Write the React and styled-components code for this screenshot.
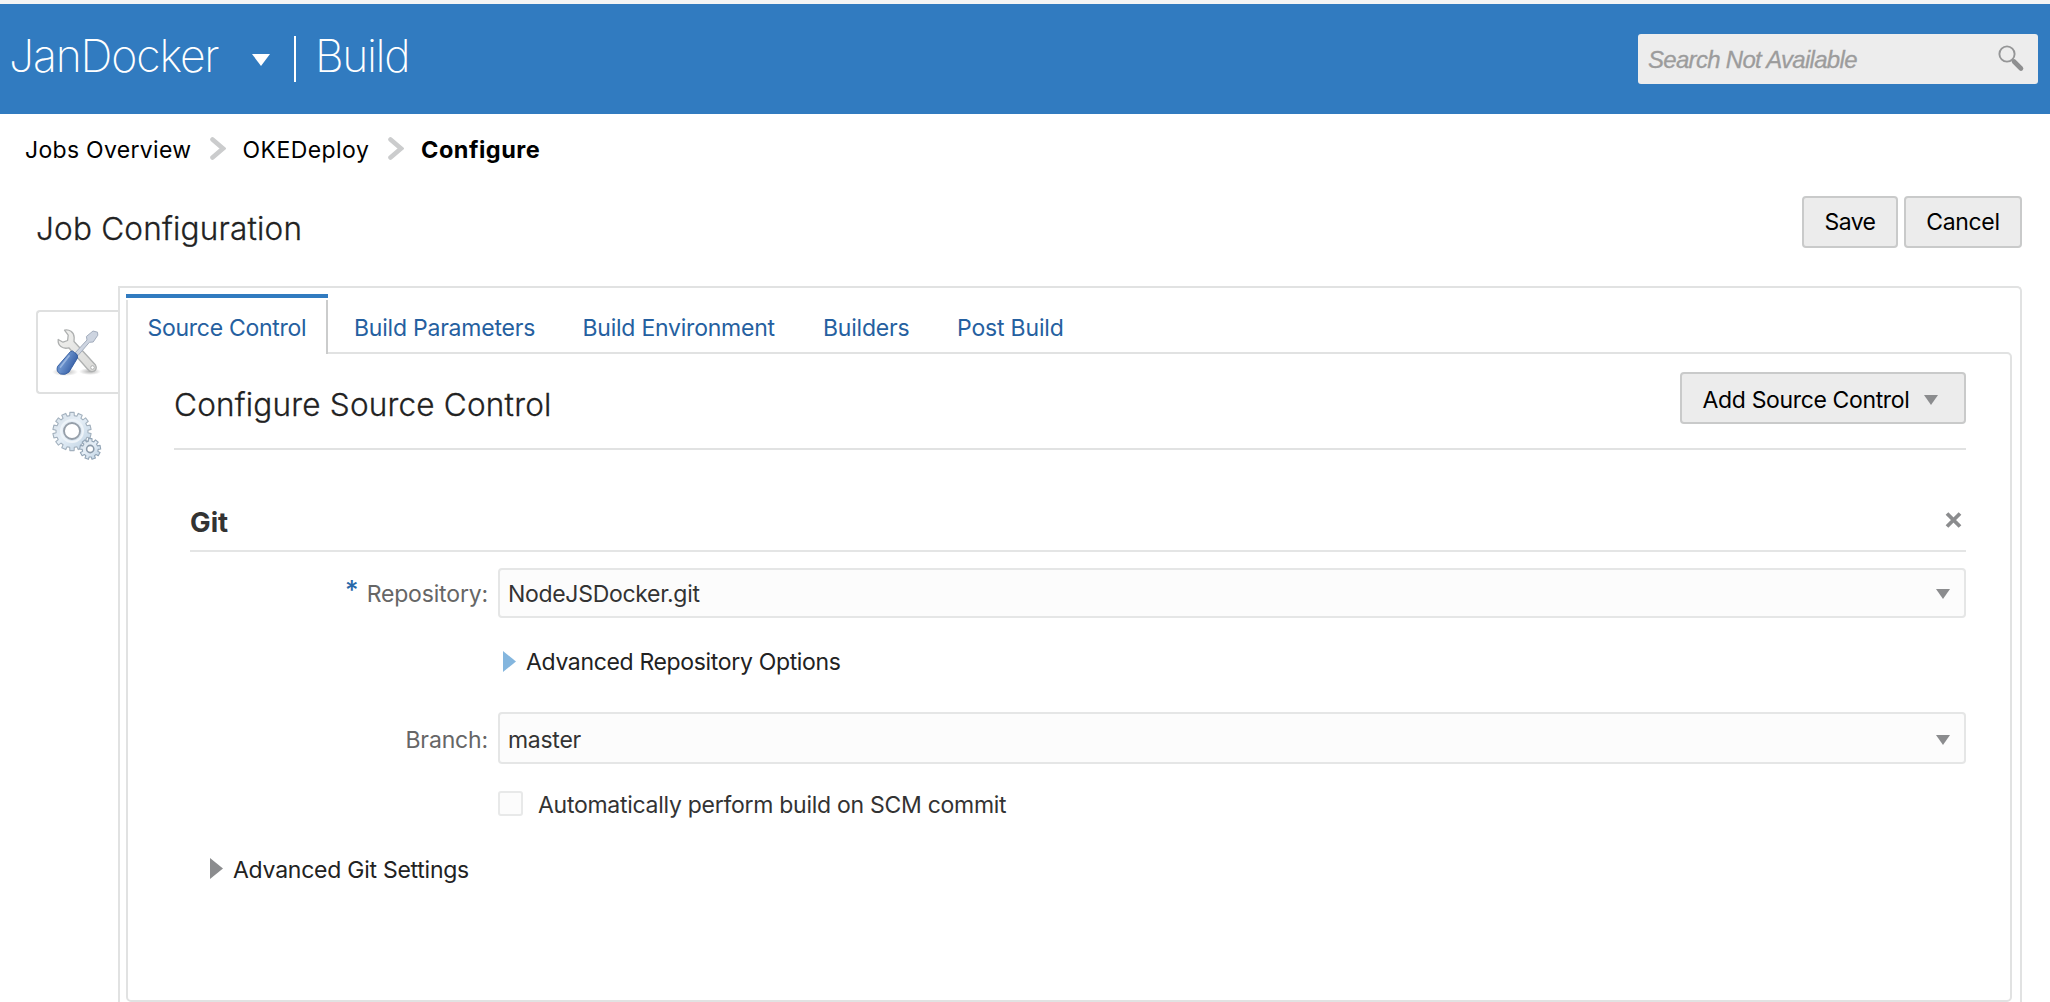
import React from 'react';
import styled, { createGlobalStyle } from 'styled-components';

const GlobalStyle = createGlobalStyle`
  * { box-sizing: border-box; }
  html, body { margin: 0; height: 100%; overflow: hidden; }
  #root { height: 100%; }
  body { background: #fff; font-family: Inter, Roboto, sans-serif; }
`;

const Text = styled.span`
  display: block;
  white-space: nowrap;
  font-size: ${(p) => p.$size || 23}px;
  font-weight: ${(p) => p.$weight || 400};
  letter-spacing: ${(p) => p.$track || 0}px;
  line-height: 1.3;
  padding-top: ${(p) => (p.$drop === undefined ? 3 : p.$drop)}px;
  color: ${(p) => p.$color || '#222'};
`;

const Page = styled.div`
  height: 1002px;
  display: flex;
  flex-direction: column;
  overflow: hidden;
`;

const Header = styled.header`
  flex: none;
  height: 114px;
  border-top: 4px solid #f3f4f4;
  background: #317bc0;
  display: flex;
  align-items: center;
  justify-content: space-between;
  padding: 0 12px 0 9px;
`;

const Brand = styled.div`
  display: flex;
  align-items: center;
`;

const BrandText = styled(Text)`
  margin-bottom: 7px;
  width: ${(p) => p.$width}px;
`;

const BrandDivider = styled.div`
  width: 2px;
  height: 46px;
  background: #fff;
  margin: 0 19px 0 24px;
`;

const SearchBox = styled.div`
  width: 400px;
  height: 50px;
  border-radius: 3px;
  background: #ededed;
  display: flex;
  align-items: center;
  justify-content: space-between;
  padding: 0 13px 0 10px;
`;

const SearchHint = styled(Text)`
  font-family: "Liberation Sans", Arial, sans-serif;
  font-style: italic;
  -webkit-text-stroke: 0.3px #9c9c9c;
`;

const Breadcrumbs = styled.nav`
  flex: none;
  height: 70px;
  display: flex;
  align-items: center;
  padding-left: 25px;
`;

const Crumb = styled(Text)`
  width: ${(p) => p.$width}px;
`;

const CrumbArrow = styled.svg`
  width: 16px;
  height: 24px;
  margin: 0 17px;
`;

const TitleBar = styled.div`
  flex: none;
  height: 102px;
  display: flex;
  justify-content: space-between;
  align-items: flex-start;
  padding: 12px 28px 0 36px;
`;

const Heading = styled(Text)`
  margin-top: ${(p) => p.$top || 0}px;
`;

const PageHeading = styled(Heading)`
  -webkit-text-stroke: 0.3px #222;
`;

const ButtonRow = styled.div`
  display: flex;
  gap: 6px;
`;

const Button = styled.button`
  width: ${(p) => p.$width}px;
  height: 52px;
  border: 2px solid #c9caca;
  border-radius: 4px;
  background: #ececec;
  padding: 0 ${(p) => p.$inset || 0}px 0 0;
  font-family: inherit;
  display: flex;
  align-items: center;
  justify-content: center;
  gap: 15px;
`;

const Main = styled.div`
  flex: 1;
  min-height: 0;
  display: flex;
  padding: 0 28px 0 34px;
`;

const SideTabs = styled.div`
  width: 84px;
  padding-top: 24px;
  display: flex;
  flex-direction: column;
  align-items: stretch;
`;

const SideTab = styled.div`
  height: 84px;
  margin-left: 2px;
  display: flex;
  align-items: center;
  padding-left: 14px;
  border: 2px solid ${(p) => (p.$active ? '#dfe0e0' : 'transparent')};
  border-right: 0;
  border-radius: 4px 0 0 4px;
`;

const OuterPanel = styled.section`
  flex: 1;
  border: 2px solid #e1e2e2;
  border-bottom: 0;
  border-top-right-radius: 5px;
  padding: 6px 8px 0 6px;
  display: flex;
  flex-direction: column;
`;

const TabBar = styled.div`
  height: 58px;
  display: flex;
`;

const Tab = styled.div`
  width: ${(p) => p.$width}px;
  padding: 17px 0 0 26px;
`;

const ActiveTab = styled.div`
  width: 202px;
  height: 60px;
  background: #fff;
  position: relative;
  z-index: 1;
`;

const TabMarker = styled.div`
  height: 4px;
  margin-bottom: 2px;
  background: #317bc0;
`;

const ActiveTabBody = styled.div`
  height: 54px;
  border-left: 2px solid #e1e2e2;
  border-right: 2px solid #cbcccc;
  padding: 11px 0 0 19.5px;
`;

const InnerPanel = styled.div`
  flex: 1;
  border: 2px solid #e1e2e2;
  border-radius: 0 5px 5px 5px;
  padding: 0 44px 0 46px;
`;

const SectionHead = styled.div`
  height: 96px;
  display: flex;
  align-items: center;
  justify-content: space-between;
  padding: 18px 0 24px;
  border-bottom: 2px solid #e1e2e2;
`;

const GitSection = styled.div`
  margin-left: 16px;
`;

const GitHead = styled.div`
  height: 102px;
  display: flex;
  align-items: center;
  justify-content: space-between;
  padding: 42px 4px 0 0;
  border-bottom: 2px solid #e4e5e5;
`;

const FormRow = styled.div`
  display: grid;
  grid-template-columns: 308px 1fr;
  align-items: center;
  height: ${(p) => p.$height}px;
  margin-top: ${(p) => p.$top}px;
`;

const Label = styled.div`
  display: flex;
  justify-content: flex-end;
  align-items: flex-start;
  gap: 8px;
  padding-right: 10px;
  margin-top: ${(p) => p.$shift || 0}px;
`;

const Required = styled(Text)`
  margin: -7px 0 -10px;
`;

const Select = styled.div`
  height: 100%;
  border: 2px solid #e5e6e6;
  border-radius: 4px;
  background: #fcfcfc;
  display: flex;
  align-items: center;
  justify-content: space-between;
  padding: 0 14px 0 8px;
`;

const Disclosure = styled.div`
  grid-column: ${(p) => (p.$wide ? '1 / 3' : '2')};
  display: flex;
  align-items: center;
  gap: 10px;
  padding-left: ${(p) => p.$indent}px;
`;

const CheckLine = styled.label`
  grid-column: 2;
  display: flex;
  align-items: center;
  gap: 15px;
`;

const CheckBox = styled.span`
  width: 25px;
  height: 25px;
  border: 2px solid #e8e9e9;
  border-radius: 3px;
  background: #fcfcfc;
`;

const Icon = styled.svg`
  flex: none;
  display: block;
  margin-top: ${(p) => p.$shift || 0}px;
`;

const Down = ({ color = '#8b8c8e', w = 14, h = 10, shift = 0 }) => (
  <Icon width={w} height={h} viewBox="0 0 14 10" preserveAspectRatio="none" $shift={shift}>
    <path d="M0 0H14L7 10Z" fill={color} />
  </Icon>
);

const Right = ({ color }) => (
  <Icon width="13" height="21" viewBox="0 0 13 21">
    <path d="M0 0L13 10.5L0 21Z" fill={color} />
  </Icon>
);

const Chevron = () => (
  <CrumbArrow viewBox="0 0 16 24">
    <path d="M2.5 2.5L13 11.5L2.5 20.5" fill="none" stroke="#cbcccd" strokeWidth="4.6" strokeLinecap="round" strokeLinejoin="miter" />
  </CrumbArrow>
);

const SearchIcon = () => (
  <Icon width="28" height="28" viewBox="0 0 28 28" $shift={-2}>
    <circle cx="10" cy="10" r="7.6" fill="none" stroke="#959697" strokeWidth="1.9" />
    <path d="M17 17.5L24 24.5" stroke="#8e8f90" strokeWidth="4.6" strokeLinecap="round" />
  </Icon>
);

const ToolsIcon = () => (
  <Icon width="50" height="50" viewBox="0 0 50 50" $shift={1}>
    <defs>
      <linearGradient id="steel" x1="0" y1="0" x2="1" y2="1">
        <stop offset="0" stopColor="#f1f1ef" />
        <stop offset="1" stopColor="#d9d9d7" />
      </linearGradient>
      <linearGradient id="grip" x1="0" y1="0" x2="1" y2="0.6">
        <stop offset="0" stopColor="#3f6cb4" />
        <stop offset="0.45" stopColor="#6b92cc" />
        <stop offset="1" stopColor="#2c559f" />
      </linearGradient>
      <radialGradient id="shade">
        <stop offset="0" stopColor="#000" stopOpacity="0.3" />
        <stop offset="1" stopColor="#000" stopOpacity="0" />
      </radialGradient>
    </defs>
    <ellipse cx="13" cy="44" rx="13" ry="4" fill="url(#shade)" />
    <ellipse cx="38" cy="43.5" rx="11" ry="3.5" fill="url(#shade)" />
    <path d="M12.5 2.2C17 1 22 4 22.2 9.5L22 13.5L43.5 37Q45.5 41 42 43.2Q38 44.5 35.5 41L16.8 19.8C10.5 21.5 5.5 17.5 6.2 11.5L11 14.2L15.6 12.5L16.2 7.2Z" fill="url(#steel)" stroke="#aeb0b0" strokeWidth="1.3" strokeLinejoin="round" />
    <circle cx="40.5" cy="39.5" r="1.8" fill="#fff" stroke="#a9abab" strokeWidth="0.9" />
    <path d="M23 25L35 12L34.4 8.5L41 3L45.5 4.2L45.8 7.2L41.2 14L37.4 14.3L26 27.5Z" fill="#cdd4e0" stroke="#a3adbd" strokeWidth="1" strokeLinejoin="round" />
    <path d="M18.5 23.5Q20.5 22 22.5 24.5Q26.5 26.5 25.5 30L17 44Q13.5 47.5 8.5 46Q3.8 43.5 5.5 38.5Z" fill="url(#grip)" stroke="#315a9e" strokeWidth="0.9" />
    <path d="M17 28L8.5 39" stroke="#a9c3e8" strokeWidth="1.8" strokeLinecap="round" opacity="0.7" />
  </Icon>
);

const gearPath = (cx, cy, teeth, outer, inner) => {
  const step = (Math.PI * 2) / teeth;
  const profile = [[-0.32, inner], [-0.25, outer], [0.25, outer], [0.32, inner]];
  const points = [];
  for (let i = 0; i < teeth; i += 1) {
    profile.forEach(([f, r]) => {
      const a = (i + f) * step - Math.PI / 2;
      points.push(`${(cx + r * Math.cos(a)).toFixed(2)} ${(cy + r * Math.sin(a)).toFixed(2)}`);
    });
  }
  return `M${points.join('L')}Z`;
};

const GearsIcon = () => (
  <Icon width="50" height="50" viewBox="0 0 50 50" $shift={0}>
    <defs>
      <linearGradient id="gear" x1="0" y1="0" x2="1" y2="1">
        <stop offset="0" stopColor="#d3dde6" />
        <stop offset="0.45" stopColor="#e6eff7" />
        <stop offset="1" stopColor="#b9cee0" />
      </linearGradient>
    </defs>
    <path d={gearPath(20, 20.5, 14, 19.2, 16)} fill="url(#gear)" stroke="#a3b1be" strokeWidth="1.1" strokeLinejoin="round" />
    <circle cx="20" cy="20" r="11" fill="none" stroke="#eef4f9" strokeWidth="2" />
    <circle cx="20" cy="20" r="8" fill="#fff" stroke="#969fa9" strokeWidth="1.9" />
    <path d={gearPath(38.2, 38, 9, 10.5, 8)} fill="url(#gear)" stroke="#93a5b6" strokeWidth="1.1" strokeLinejoin="round" />
    <circle cx="38.2" cy="38" r="3.6" fill="#fff" stroke="#8b9aa9" strokeWidth="1.6" />
  </Icon>
);

const CloseIcon = () => (
  <Icon width="18" height="18" viewBox="0 0 18 18" $shift={-2}>
    <path d="M3 2.5L16 15.5M16 2.5L3 15.5" stroke="#8b8c8e" strokeWidth="3.8" />
  </Icon>
);

const tabs = [
  { label: 'Build Parameters', width: 228.5, track: -0.22 },
  { label: 'Build Environment', width: 240.5, track: -0.23 },
  { label: 'Builders', width: 134, track: -0.22 },
  { label: 'Post Build', width: 160, track: -0.18 },
];

export default function App() {
  return (
    <Page>
      <GlobalStyle />
      <Header>
        <Brand>
          <BrandText $size={44.5} $weight={150} $track={-1.15} $color="#fff" $width={243}>JanDocker</BrandText>
          <Down color="#fff" w={18} h={12} shift={1} />
          <BrandDivider />
          <BrandText $size={44.5} $weight={150} $track={-1.4} $color="#fff" $width={95}>Build</BrandText>
        </Brand>
        <SearchBox>
          <SearchHint $size={24} $weight={400} $track={-0.7} $color="#9c9c9c" $drop={2}>Search Not Available</SearchHint>
          <SearchIcon />
        </SearchBox>
      </Header>
      <Breadcrumbs>
        <Crumb $track={0.3} $color="#000" $width={167.5}>Jobs Overview</Crumb>
        <Chevron />
        <Crumb $track={0.44} $color="#000" $width={128.5}>OKEDeploy</Crumb>
        <Chevron />
        <Crumb $size={23.5} $weight={700} $track={0.5} $color="#000" $width={122} $drop={2}>Configure</Crumb>
      </Breadcrumbs>
      <TitleBar>
        <PageHeading $size={31.5} $weight={300} $track={0.2} $top={10}>Job Configuration</PageHeading>
        <ButtonRow>
          <Button $width={96}><Text $track={-0.6} $color="#000" $drop={1}>Save</Text></Button>
          <Button $width={118}><Text $track={-0.35} $color="#000" $drop={1}>Cancel</Text></Button>
        </ButtonRow>
      </TitleBar>
      <Main>
        <SideTabs>
          <SideTab $active><ToolsIcon /></SideTab>
          <SideTab><GearsIcon /></SideTab>
        </SideTabs>
        <OuterPanel>
          <TabBar>
            <ActiveTab>
              <TabMarker />
              <ActiveTabBody><Text $track={-0.28} $color="#2560a0">Source Control</Text></ActiveTabBody>
            </ActiveTab>
            {tabs.map((tab) => (
              <Tab key={tab.label} $width={tab.width}>
                <Text $track={tab.track} $color="#2560a0">{tab.label}</Text>
              </Tab>
            ))}
          </TabBar>
          <InnerPanel>
            <SectionHead>
              <PageHeading $size={31.5} $weight={300} $track={0.2} $top={12}>Configure Source Control</PageHeading>
              <Button $width={286} $inset={5}>
                <Text $track={-0.36} $color="#000" $drop={5}>Add Source Control</Text>
                <Down shift={3} />
              </Button>
            </SectionHead>
            <GitSection>
              <GitHead>
                <Heading $size={27.5} $weight={650} $top={0} $color="#333">Git</Heading>
                <CloseIcon />
              </GitHead>
              <FormRow $top={16} $height={50}>
                <Label>
                  <Required $size={26} $weight={500} $color="#2868a8">*</Required>
                  <Text $track={-0.16} $color="#666">Repository:</Text>
                </Label>
                <Select>
                  <Text $track={-0.31} $color="#333">NodeJSDocker.git</Text>
                  <Down shift={1} />
                </Select>
              </FormRow>
              <FormRow $top={24} $height={39}>
                <Disclosure $indent={5}>
                  <Right color="#84b6de" />
                  <Text $track={-0.34}>Advanced Repository Options</Text>
                </Disclosure>
              </FormRow>
              <FormRow $top={31} $height={52}>
                <Label $shift={3}><Text $track={-0.15} $color="#666">Branch:</Text></Label>
                <Select>
                  <Text $track={-0.28} $color="#333" $drop={5}>master</Text>
                  <Down shift={3} />
                </Select>
              </FormRow>
              <FormRow $top={22} $height={33}>
                <CheckLine>
                  <CheckBox />
                  <Text $track={-0.28} $color="#333" $drop={5}>Automatically perform build on SCM commit</Text>
                </CheckLine>
              </FormRow>
              <FormRow $top={30} $height={40}>
                <Disclosure $wide $indent={20}>
                  <Right color="#8b8c8e" />
                  <Text $track={-0.25}>Advanced Git Settings</Text>
                </Disclosure>
              </FormRow>
            </GitSection>
          </InnerPanel>
        </OuterPanel>
      </Main>
    </Page>
  );
}
